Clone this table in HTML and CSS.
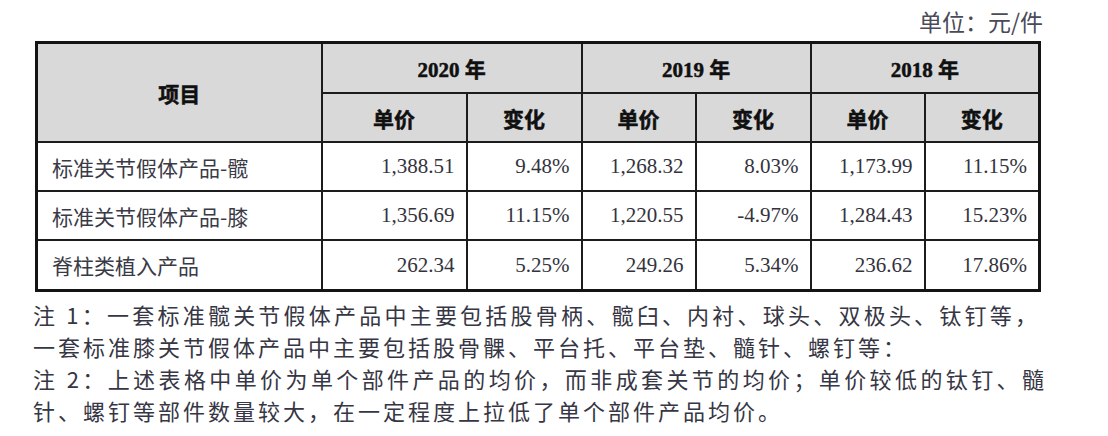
FILE: index.html
```html
<!DOCTYPE html>
<html lang="zh-CN">
<head>
<meta charset="utf-8">
<title>单价变化</title>
<link rel="stylesheet" href="styles.css">
</head>
<body>
<div class="page">
  <div class="unit">单位：元/件</div>
  <table class="price">
    <colgroup>
      <col class="c-name">
      <col class="c-p1">
      <col class="c-ch">
      <col class="c-p">
      <col class="c-ch">
      <col class="c-p">
      <col class="c-ch">
    </colgroup>
    <thead>
      <tr class="r-year">
        <th rowspan="2">项目</th>
        <th colspan="2">2020 年</th>
        <th colspan="2">2019 年</th>
        <th colspan="2">2018 年</th>
      </tr>
      <tr class="r-sub">
        <th>单价</th><th>变化</th>
        <th>单价</th><th>变化</th>
        <th>单价</th><th>变化</th>
      </tr>
    </thead>
    <tbody>
      <tr>
        <td class="name">标准关节假体产品-髋</td>
        <td class="num">1,388.51</td><td class="num">9.48%</td>
        <td class="num">1,268.32</td><td class="num">8.03%</td>
        <td class="num">1,173.99</td><td class="num">11.15%</td>
      </tr>
      <tr>
        <td class="name">标准关节假体产品-膝</td>
        <td class="num">1,356.69</td><td class="num">11.15%</td>
        <td class="num">1,220.55</td><td class="num">-4.97%</td>
        <td class="num">1,284.43</td><td class="num">15.23%</td>
      </tr>
      <tr>
        <td class="name">脊柱类植入产品</td>
        <td class="num">262.34</td><td class="num">5.25%</td>
        <td class="num">249.26</td><td class="num">5.34%</td>
        <td class="num">236.62</td><td class="num">17.86%</td>
      </tr>
    </tbody>
  </table>
  <div class="notes">
    <div class="line l1">注 1：一套标准髋关节假体产品中主要包括股骨柄、髋臼、内衬、球头、双极头、钛钉等，</div>
    <div class="line">一套标准膝关节假体产品中主要包括股骨髁、平台托、平台垫、髓针、螺钉等：</div>
    <div class="line l3">注 2：上述表格中单价为单个部件产品的均价，而非成套关节的均价；单价较低的钛钉、髓</div>
    <div class="line">针、螺钉等部件数量较大，在一定程度上拉低了单个部件产品均价。</div>
  </div>
</div>
</body>
</html>
```
FILE: styles.css
```css
html, body {
  margin: 0;
  padding: 0;
  background: #ffffff;
}

body {
  font-family: "Liberation Serif", "Noto Sans CJK SC", serif;
  color: #2c2c36;
}

.page {
  width: 1108px;
  height: 436px;
  padding-left: 35px;
  box-sizing: border-box;
  overflow: hidden;
}

.unit {
  width: 1008px;
  height: 41px;
  box-sizing: border-box;
  padding-top: 6px;
  text-align: right;
  font-family: "Noto Sans CJK SC", sans-serif;
  font-size: 23px;
  line-height: 30px;
  color: #4a4a58;
}

.price {
  border-collapse: collapse;
  table-layout: fixed;
  width: 1003px;
  border: 3px solid #141414;
}

.c-name { width: 285px; }
.c-p1 { width: 145px; }
.c-ch { width: 115px; }
.c-p { width: 114px; }

.price th,
.price td {
  border: 2px solid #1c1c1c;
  padding: 0;
  font-size: 21px;
}

.price th {
  background: #d9d9d9;
  font-family: "Liberation Serif", "Noto Sans CJK SC", serif;
  font-weight: 700;
  color: #101010;
  text-align: center;
  -webkit-text-stroke: 0.5px #101010;
}

.r-year th { height: 48px; }
.r-sub th { height: 47px; }

.price tbody td {
  height: 47px;
  background: #ffffff;
}

.price tbody tr:last-child td { height: 48px; }

.price td.name {
  padding-left: 14px;
  font-family: "Noto Sans CJK SC", sans-serif;
  color: #3a3a46;
  text-align: left;
}

.price td.num {
  padding-right: 11px;
  font-family: "Liberation Serif", serif;
  color: #33333d;
  text-align: right;
}

.notes {
  margin-top: 6px;
  margin-left: -2px;
  font-size: 22px;
  line-height: 32px;
  letter-spacing: 3px;
  color: #363644;
  white-space: nowrap;
}

.notes .line {
  font-family: "Noto Sans CJK SC", sans-serif;
}

.notes .l1 {
  width: 1007px;
  text-align: justify;
  text-align-last: justify;
}

.notes .l3 {
  width: 1014px;
  text-align: justify;
  text-align-last: justify;
}
```
